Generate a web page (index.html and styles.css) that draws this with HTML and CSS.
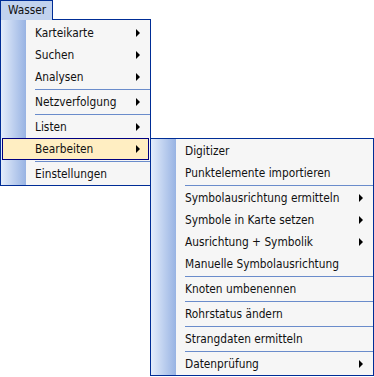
FILE: index.html
```html
<!DOCTYPE html>
<html lang="de">
<head>
    <meta charset="UTF-8">
    <meta name="viewport" content="width=device-width, initial-scale=1.0">
    <title>Wasser</title>
    <link rel="stylesheet" href="styles.css">
</head>
<body>
    <div class="menus">
        <!-- Main menu: tab + dropdown -->
        <div class="menu-column">
            <div class="menubar-item">Wasser</div>
            <ul class="dropdown main-menu">
                <li class="item has-sub">Karteikarte</li>
                <li class="item has-sub">Suchen</li>
                <li class="item has-sub">Analysen</li>
                <li class="separator"></li>
                <li class="item has-sub">Netzverfolgung</li>
                <li class="separator"></li>
                <li class="item has-sub">Listen</li>
                <li class="item has-sub active">Bearbeiten</li>
                <li class="separator"></li>
                <li class="item">Einstellungen</li>
            </ul>
        </div>

        <!-- Submenu of "Bearbeiten" -->
        <ul class="dropdown sub-menu">
            <li class="item">Digitizer</li>
            <li class="item">Punktelemente importieren</li>
            <li class="separator"></li>
            <li class="item has-sub">Symbolausrichtung ermitteln</li>
            <li class="item has-sub">Symbole in Karte setzen</li>
            <li class="item has-sub">Ausrichtung + Symbolik</li>
            <li class="item">Manuelle Symbolausrichtung</li>
            <li class="separator"></li>
            <li class="item">Knoten umbenennen</li>
            <li class="separator"></li>
            <li class="item">Rohrstatus ändern</li>
            <li class="separator"></li>
            <li class="item">Strangdaten ermitteln</li>
            <li class="separator"></li>
            <li class="item has-sub">Datenprüfung</li>
        </ul>
    </div>
</body>
</html>
```

FILE: styles.css
```css
body {
    margin: 0;
    padding: 0;
    background: white;
    font-family: "DejaVu Sans Condensed", "DejaVu Sans", sans-serif;
    font-size: 11.8px;
    color: #111;
}

.menus {
    display: flex;
    align-items: flex-start;
}

.menu-column {
    display: flex;
    flex-direction: column;
    align-items: flex-start;
}

/* the "Wasser" tab on the menu bar */
.menubar-item {
    position: relative;
    z-index: 2;
    height: 19px;
    line-height: 19px;
    padding: 0 7px;
    width: 37px;
    background: #c1d2ee;
    border: 1px solid #002d96;
    border-bottom: none;
    margin-bottom: -1px;
    box-sizing: content-box;
}

ul.dropdown {
    list-style: none;
    margin: 0;
    background: linear-gradient(to right, #e4edfb 0, #98b3e3 25px, #f6f6f6 25px);
    border: 1px solid #002d96;
}

ul.main-menu {
    width: 149px;
    padding: 2px 0 0 0;
}

ul.sub-menu {
    width: 222px;
    padding: 1px 0 0 0;
    margin-top: 138px;
    margin-left: -1px;
}

.item {
    position: relative;
    height: 20px;
    line-height: 20px;
    margin: 0 1px;
    padding-left: 32px;
    border: 1px solid transparent;
}

.item.has-sub::after {
    content: "";
    position: absolute;
    right: 8px;
    top: 6px;
    border-top: 4px solid transparent;
    border-bottom: 4px solid transparent;
    border-left: 4px solid black;
}

.item.active {
    background: #ffeec2;
    border-color: #000080;
}

.separator {
    height: 3px;
    margin-left: 34px;
    background: linear-gradient(#f6f6f6 1px, #6a8ccb 1px, #6a8ccb 2px, #f6f6f6 2px);
}
```
